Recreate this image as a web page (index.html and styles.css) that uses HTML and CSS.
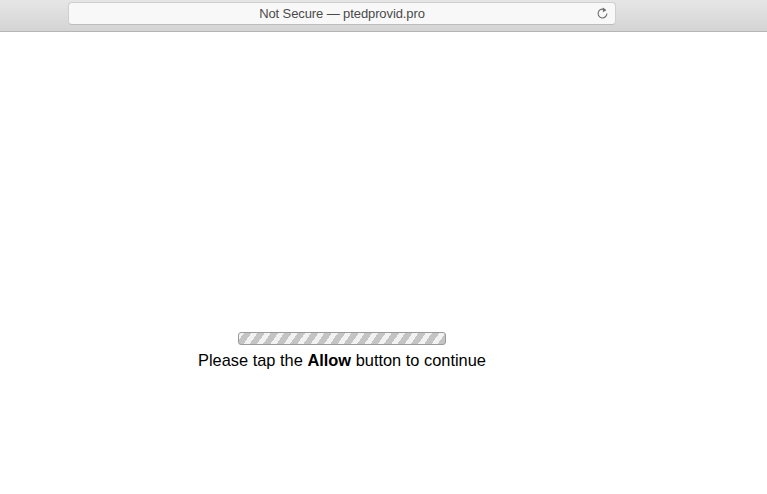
FILE: index.html
```html
<!DOCTYPE html>
<html lang="en">
<head>
  <meta charset="UTF-8">
  <title>ptedprovid.pro</title>
  <link rel="stylesheet" href="styles.css">
</head>
<body>
  <header class="toolbar">
    <div class="address-bar">
      <span class="address-text">Not Secure — ptedprovid.pro</span>
      <svg class="reload" width="13" height="13" viewBox="0 0 13 13">
        <path d="M9.6 3.4 A4.4 4.4 0 1 0 10.9 6.6" fill="none" stroke="#6e6e6e" stroke-width="1.1"/>
        <path d="M6.9 0.6 L10.2 3.2 L6.9 5.2 Z" fill="#6e6e6e"/>
      </svg>
    </div>
  </header>

  <main class="page">
    <div class="prompt">
      <div class="progress"></div>
      <p class="message">Please tap the <b>Allow</b> button to continue</p>
    </div>
  </main>
</body>
</html>
```

FILE: styles.css
```css
* {
  margin: 0;
  padding: 0;
  box-sizing: border-box;
}

body {
  background: #ffffff;
  font-family: "Liberation Sans", Arial, sans-serif;
  width: 767px;
  height: 494px;
  overflow: hidden;
}

.toolbar {
  height: 32px;
  background: linear-gradient(#e6e6e6, #d4d4d4);
  border-bottom: 1px solid #b5b5b5;
  padding: 2px 0 0 68px;
}

.address-bar {
  position: relative;
  width: 548px;
  height: 23px;
  background: #f8f8f8;
  border: 1px solid #cfcfcf;
  border-bottom-color: #bdbdbd;
  border-radius: 4px;
  display: flex;
  align-items: center;
  justify-content: center;
}

.address-text {
  font-size: 13px;
  color: #4a4a4a;
  letter-spacing: -0.1px;
}

.reload {
  position: absolute;
  right: 6px;
  top: 4px;
}

.page {
  display: flex;
  padding-top: 300px;
}

.prompt {
  width: 684px;
  display: flex;
  flex-direction: column;
  align-items: center;
}

.progress {
  width: 208px;
  height: 13px;
  border: 1px solid #9a9a9a;
  border-radius: 3px;
  background: repeating-linear-gradient(
    -55deg,
    #c4c4c4 0,
    #c4c4c4 6px,
    #f2f2f2 6px,
    #f2f2f2 11px
  );
}

.message {
  font-size: 16.4px;
  color: #000;
  margin-top: 4px;
  line-height: 22px;
}
```
